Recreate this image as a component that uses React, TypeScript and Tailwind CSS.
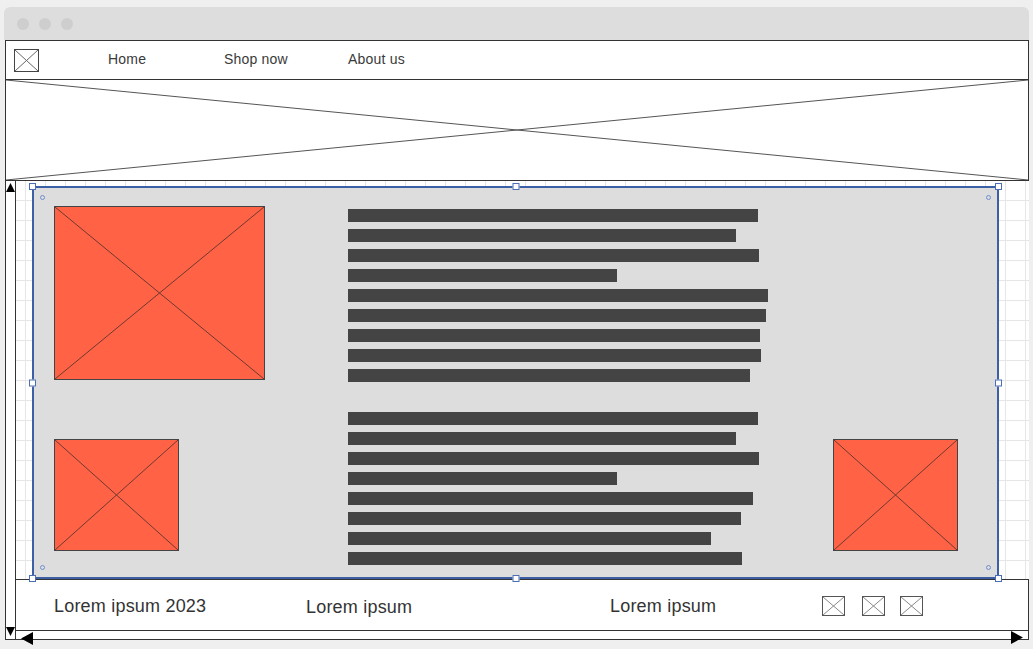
import React from "react";

const Cross = ({ className, line }: { className: string; line: string }) => (
  <div className={`relative ${className}`}>
    <svg className="absolute inset-0 w-full h-full" viewBox="0 0 100 100" preserveAspectRatio="none">
      <line x1="0" y1="0" x2="100" y2="100" stroke={line} strokeWidth="1" vectorEffect="non-scaling-stroke" />
      <line x1="0" y1="100" x2="100" y2="0" stroke={line} strokeWidth="1" vectorEffect="non-scaling-stroke" />
    </svg>
  </div>
);

const Bars = ({ widths }: { widths: number[] }) => (
  <div className="flex flex-col gap-[7px]">
    {widths.map((w, i) => (
      <div key={i} className="h-[13px] bg-[#444444]" style={{ width: w }} />
    ))}
  </div>
);

const Handle = ({ className }: { className: string }) => (
  <div className={`absolute w-[7px] h-[7px] bg-white border border-[#4a6db5] ${className}`} />
);

const Dot = ({ className }: { className: string }) => (
  <div className={`absolute w-[5px] h-[5px] rounded-full border border-[#6f8fd0] ${className}`} />
);

export default function App() {
  const nav = [
    { title: "Home", w: "w-[116px]" },
    { title: "Shop now", w: "w-[124px]" },
    { title: "About us", w: "w-[100px]" },
  ];

  return (
    <div className="w-[1033px] h-[649px] bg-[#efefef] pt-[7px] px-[4px] overflow-hidden font-['Liberation_Sans',Arial,sans-serif] text-[#333]">
      <div className="h-full flex flex-col">
        {/* window title bar */}
        <div className="h-[33px] shrink-0 bg-[#dddddd] rounded-t-[6px] flex items-center gap-[10px] pl-[13px]">
          <div className="w-[12px] h-[12px] rounded-full bg-[#cecece]" />
          <div className="w-[12px] h-[12px] rounded-full bg-[#cecece]" />
          <div className="w-[12px] h-[12px] rounded-full bg-[#cecece]" />
        </div>

        <div className="pl-[1px] flex flex-col">
          {/* nav */}
          <div className="h-[40px] w-[1024px] border border-[#333] bg-white flex items-center">
            <Cross className="ml-[8px] w-[25px] h-[23px] border border-[#444] bg-white" line="#666" />
            <div className="ml-[69px] pb-[2px] flex items-center text-[14px] tracking-[0.2px] text-[#3a3a3a]">
              {nav.map((n) => (
                <div key={n.title} className={n.w}>
                  {n.title}
                </div>
              ))}
            </div>
          </div>

          {/* hero */}
          <div className="h-[101px] w-[1024px] border-x border-b border-[#333] bg-white relative">
            <svg className="absolute inset-0 w-full h-full" viewBox="0 0 100 100" preserveAspectRatio="none">
              <line x1="0" y1="0" x2="100" y2="100" stroke="#555" strokeWidth="1" vectorEffect="non-scaling-stroke" />
              <line x1="0" y1="100" x2="100" y2="0" stroke="#555" strokeWidth="1" vectorEffect="non-scaling-stroke" />
            </svg>
          </div>

          {/* canvas */}
          <div className="h-[459px] w-[1024px] border-l border-b border-[#333] flex">
            <div className="w-[10px] border-r border-[#333] bg-white flex flex-col justify-between pt-[2px] pb-[3px]">
              <svg width="9" height="9" viewBox="0 0 9 9">
                <polygon points="4.5,0 9,9 0,9" fill="#000" />
              </svg>
              <svg width="9" height="9" viewBox="0 0 9 9">
                <polygon points="0,0 9,0 4.5,9" fill="#000" />
              </svg>
            </div>

            <div className="flex-1 flex flex-col">
              <div className="h-[398px] bg-white bg-[linear-gradient(to_right,#e6e6e6_1px,transparent_1px),linear-gradient(to_bottom,#e6e6e6_1px,transparent_1px)] bg-[size:20px_20px] bg-[position:9px_19px] pl-[16px] pt-[5px]">
                <div className="relative w-[967px] h-[393px] border-2 border-[#3d5fa6] bg-[#dddddd] pl-[20px] pt-[18px]">
                  <Handle className="-left-[5px] -top-[5px]" />
                  <Handle className="left-1/2 -translate-x-1/2 -top-[5px]" />
                  <Handle className="-right-[5px] -top-[5px]" />
                  <Handle className="-left-[5px] top-1/2 -translate-y-1/2" />
                  <Handle className="-right-[5px] top-1/2 -translate-y-1/2" />
                  <Handle className="-left-[5px] -bottom-[5px]" />
                  <Handle className="left-1/2 -translate-x-1/2 -bottom-[5px]" />
                  <Handle className="-right-[5px] -bottom-[5px]" />
                  <Dot className="left-[6px] top-[7px]" />
                  <Dot className="right-[6px] top-[7px]" />
                  <Dot className="left-[6px] bottom-[7px]" />
                  <Dot className="right-[6px] bottom-[7px]" />

                  <div className="flex items-start">
                    <Cross className="w-[211px] h-[174px] border border-[#444] bg-[#ff6245]" line="#6b3a30" />
                    <div className="ml-[83px] mt-[3px]">
                      <Bars widths={[410, 388, 411, 269, 420, 418, 412, 413, 402]} />
                    </div>
                  </div>

                  <div className="flex items-start mt-[30px]">
                    <Cross className="mt-[27px] w-[125px] h-[112px] border border-[#444] bg-[#ff6245]" line="#6b3a30" />
                    <div className="ml-[169px] w-[420px]">
                      <Bars widths={[410, 388, 411, 269, 405, 393, 363, 394]} />
                    </div>
                    <Cross className="ml-[65px] mt-[27px] w-[125px] h-[112px] border border-[#444] bg-[#ff6245]" line="#6b3a30" />
                  </div>
                </div>
              </div>

              {/* footer */}
              <div className="h-[52px] border-y border-r border-[#333] bg-white flex items-center pl-[38px] text-[18px] tracking-[0.2px] pt-[2px]">
                <div className="w-[252px]">Lorem ipsum 2023</div>
                <div className="w-[304px] pt-[2px]">Lorem ipsum</div>
                <div className="w-[212px]">Lorem ipsum</div>
                <div className="flex">
                  <Cross className="w-[23px] h-[20px] border border-[#555] bg-white" line="#888" />
                  <Cross className="ml-[17px] w-[23px] h-[20px] border border-[#555] bg-white" line="#888" />
                  <Cross className="ml-[15px] w-[23px] h-[20px] border border-[#555] bg-white" line="#888" />
                </div>
              </div>

              {/* horizontal scroll */}
              <div className="h-[8px] border-r border-[#333] bg-white relative">
                <svg className="absolute left-[5px] top-[1px]" width="12" height="13" viewBox="0 0 12 13">
                  <polygon points="0,6.5 12,0 12,13" fill="#000" />
                </svg>
                <svg className="absolute left-[995px] top-0" width="12" height="13" viewBox="0 0 12 13">
                  <polygon points="12,6.5 0,0 0,13" fill="#000" />
                </svg>
              </div>
            </div>
          </div>
        </div>
      </div>
    </div>
  );
}
